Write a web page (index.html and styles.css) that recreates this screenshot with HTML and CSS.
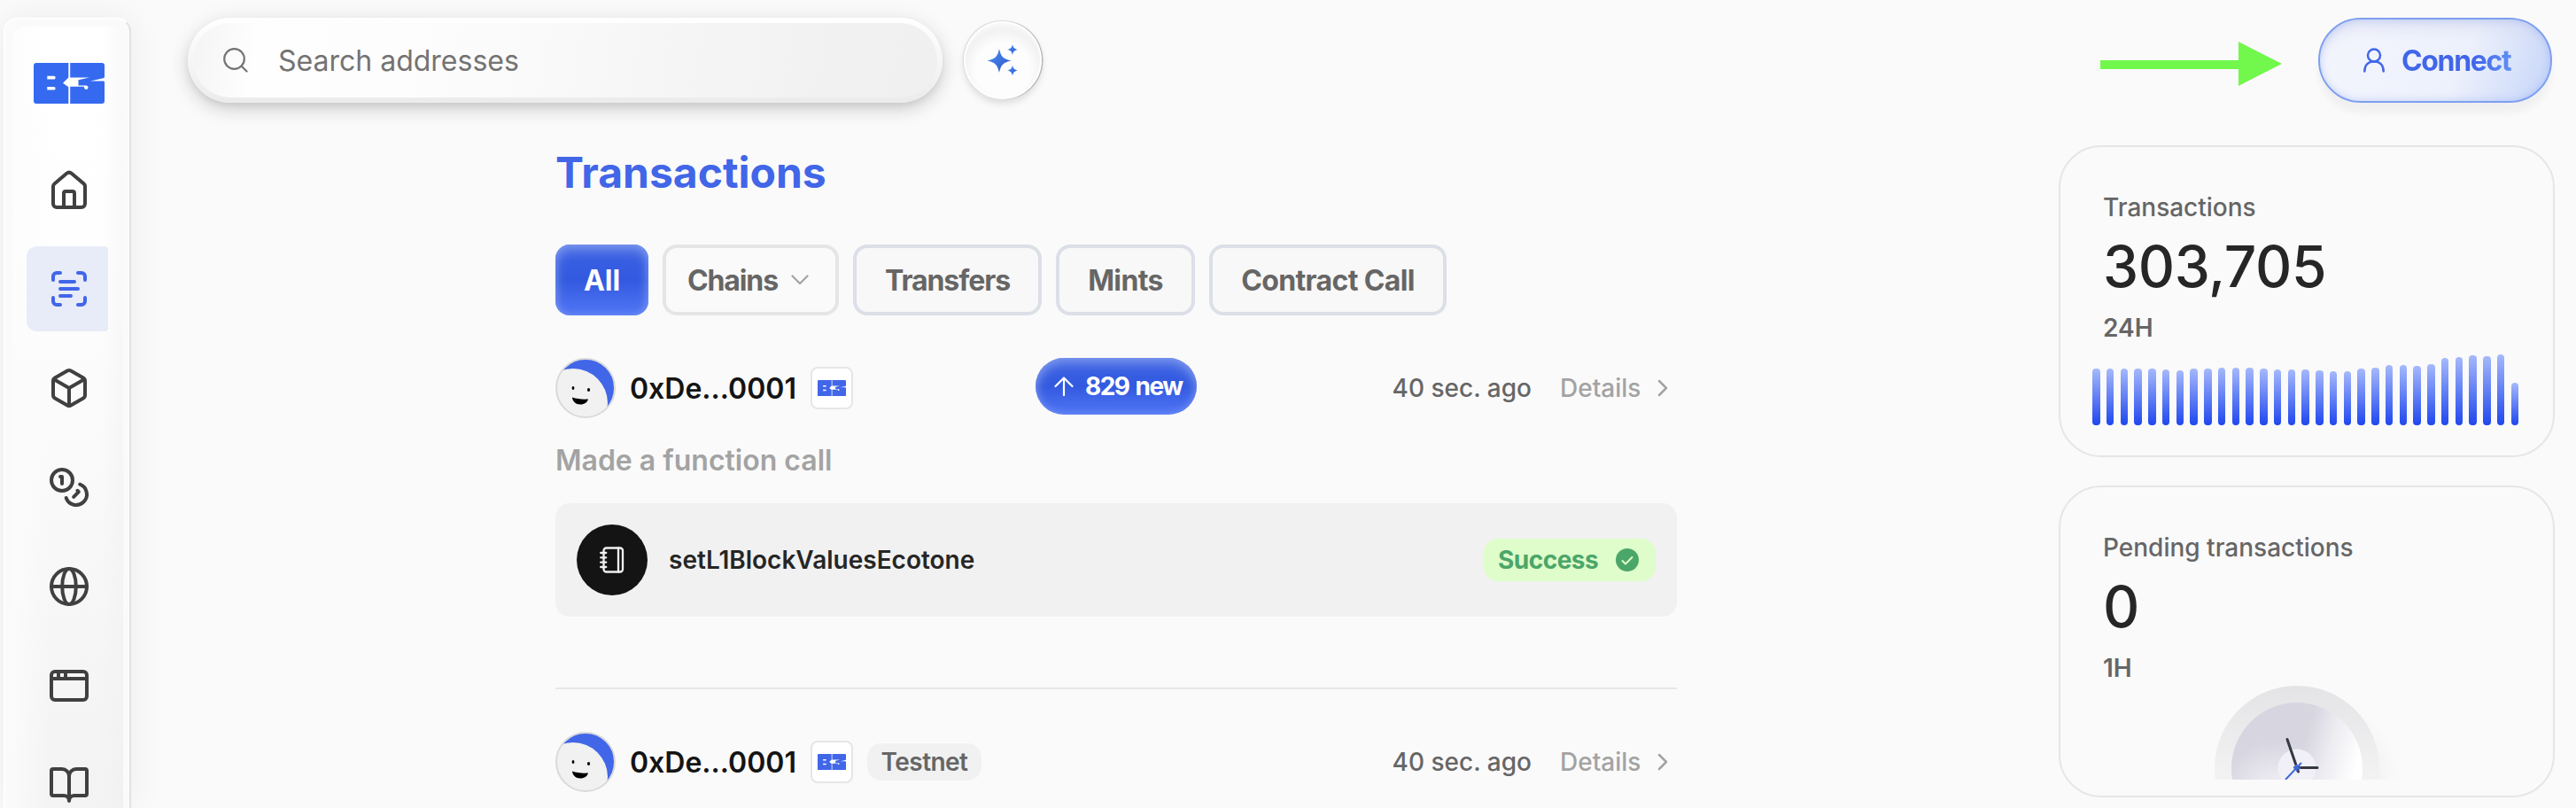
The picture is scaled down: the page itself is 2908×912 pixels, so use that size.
FILE: index.html
```
<!DOCTYPE html>
<html lang="en">
<head>
<meta charset="utf-8">
<title>Transactions</title>
<link rel="stylesheet" href="styles.css">
</head>
<body>
<svg class="defs" width="0" height="0" aria-hidden="true">
  <symbol id="b3" viewBox="0 0 80 46">
    <path fill="currentColor" d="M3 0h36.300v16.500L33 22.700l6.300 4.600V46H3a3 3 0 0 1-3-3V3a3 3 0 0 1 3-3zM15.300 14.700v3.800h7.500c2.400 0 2.400-3.800 0-3.800zM15.300 27v3.600h7.500c2.400 0 2.400-3.600 0-3.600z" fill-rule="evenodd"/>
    <path fill="currentColor" d="M41.200 0H77a3 3 0 0 1 3 3v12.500c0 1-.6 1.500-1.500 1.700L64 20.500h14.500c1 0 1.500.5 1.500 1.500V43a3 3 0 0 1-3 3H41.200V26.800h15.600c0 4 4.700 4 4.700 1 0-2-1.500-2.300-3-2.300h-8v-6.300L63 16.400H41.200z"/>
  </symbol>
  <symbol id="chev" viewBox="0 0 12 20"><path d="M2 2l8 8-8 8" fill="none" stroke="currentColor" stroke-width="2.500" stroke-linecap="round" stroke-linejoin="round"/></symbol>
  <symbol id="face" viewBox="0 0 68 68">
    <clipPath id="fc"><circle cx="34" cy="34" r="33"/></clipPath>
    <circle cx="34" cy="34" r="33" fill="#4166e8"/>
    <circle cx="20" cy="51" r="39" fill="#f1f1f1" clip-path="url(#fc)"/>
    <circle cx="34" cy="34" r="33" fill="none" stroke="#dadada" stroke-width="2"/>
    <ellipse cx="20" cy="34" rx="1.400" ry="2"/><ellipse cx="37.500" cy="36" rx="1.600" ry="2"/>
    <path d="M19 44.500c5 1.800 12 2.500 18 2-1 3.500-4 6-9 6s-8.600-3.500-9-8z"/>
  </symbol>
</svg>
<div class="app">
  <nav class="sidebar">
    <div class="panel">
      <svg class="logo"><use href="#b3"/></svg>
      <a class="nav"><svg viewBox="0 0 24 24"><path d="M3 10.200a2 2 0 0 1 .7-1.500l6.900-5.800a2.200 2.200 0 0 1 2.800 0l6.900 5.800a2 2 0 0 1 .7 1.500V20a2 2 0 0 1-2 2H5a2 2 0 0 1-2-2z"/><path d="M9 22v-8a1 1 0 0 1 1-1h4a1 1 0 0 1 1 1v8"/></svg></a>
      <a class="nav active"><svg viewBox="0 0 24 24"><path d="M3 7V5a2 2 0 0 1 2-2h2M17 3h2a2 2 0 0 1 2 2v2M21 17v2a2 2 0 0 1-2 2h-2M7 21H5a2 2 0 0 1-2-2v-2M7 8h8M7 12h10M7 16h6"/></svg></a>
      <a class="nav"><svg viewBox="0 0 24 24"><path d="M21 8a2 2 0 0 0-1-1.730l-7-4a2 2 0 0 0-2 0l-7 4A2 2 0 0 0 3 8v8a2 2 0 0 0 1 1.730l7 4a2 2 0 0 0 2 0l7-4A2 2 0 0 0 21 16zM3.300 7l8.700 5 8.700-5M12 22V12"/></svg></a>
      <a class="nav"><svg viewBox="0 0 24 24"><circle cx="8" cy="8" r="6"/><path d="M18.090 10.370A6 6 0 1 1 10.340 18M7 6h1v4M16.710 13.880l.7.710-2.820 2.820"/></svg></a>
      <a class="nav"><svg viewBox="0 0 24 24"><circle cx="12" cy="12" r="10"/><ellipse cx="12" cy="12" rx="3.900" ry="10"/><path d="M2 12h20"/></svg></a>
      <a class="nav"><svg viewBox="0 0 24 24"><rect x="2" y="4" width="20" height="16" rx="2"/><path d="M2 8h20M6 4v4M10 4v4"/></svg></a>
      <a class="nav last"><svg viewBox="0 0 24 24"><path d="M12 7v14M3 18a1 1 0 0 1-1-1V4a1 1 0 0 1 1-1h5a4 4 0 0 1 4 4 4 4 0 0 1 4-4h5a1 1 0 0 1 1 1v13a1 1 0 0 1-1 1h-6a3 3 0 0 0-3 3 3 3 0 0 0-3-3z"/></svg></a>
    </div>
  </nav>
  <div class="page">
    <header class="top">
      <div class="search">
        <svg viewBox="0 0 28 28"><circle cx="12.500" cy="12.500" r="11.300"/><path d="M20.500 20.500l6 6"/></svg>
        <span>Search addresses</span>
      </div>
      <button class="spark" aria-label="Assistant">
        <svg viewBox="0 0 36 36"><defs><linearGradient id="sg" x1="0" y1="0" x2="1" y2="1"><stop stop-color="#4c90f5"/><stop offset="1" stop-color="#2d55c8"/></linearGradient></defs>
        <g fill="url(#sg)"><path d="M14 5c2 9 4.500 11.500 13.500 13.500C18.500 20.500 16 23 14 32c-2-9-4.500-11.500-13.500-13.500C9.500 16.500 12 14 14 5z"/><path d="M29 0c.8 4 2.200 5.300 6 6-3.800.8-5.200 2-6 6-.8-4-2.200-5.200-6-6 3.800-.7 5.200-2 6-6z"/><path d="M29 23.500c.8 4 2.200 5.300 6 6-3.800.8-5.200 2-6 6-.8-4-2.200-5.200-6-6 3.800-.7 5.200-2 6-6z"/></g></svg>
      </button>
      <svg class="arrow" viewBox="0 0 205 50"><path d="M0 21h156V0l49 25-49 25V31H0z" fill="#72f74c"/></svg>
      <button class="connect">
        <svg viewBox="0 0 24 28"><circle cx="12" cy="8.500" r="7"/><path d="M1.300 26.500C1.300 19.500 5.500 15.500 12 15.500s10.700 4 10.700 11"/></svg>
        <span>Connect</span>
      </button>
    </header>
    <div class="content">
      <main class="feed">
        <h1>Transactions</h1>
        <div class="chips">
          <button class="chip all">All</button>
          <button class="chip chains"><span>Chains</span><svg viewBox="0 0 20 12"><path d="M1.500 1.500L10 10l8.500-8.500"/></svg></button>
          <button class="chip w1">Transfers</button>
          <button class="chip w2">Mints</button>
          <button class="chip w3">Contract Call</button>
        </div>
        <article class="tx">
          <div class="row">
            <svg class="face"><use href="#face"/></svg>
            <span class="addr">0xDe...0001</span>
            <span class="net"><svg><use href="#b3"/></svg></span>
            <span class="time">40 sec. ago</span>
            <a class="details">Details<svg><use href="#chev"/></svg></a>
          </div>
          <p class="kind">Made a function call</p>
          <div class="call">
            <span class="disc"><svg viewBox="0 0 28 30"><rect x="4.500" y="1.500" width="21.500" height="27" rx="3"/><path d="M21 1.500v27M1.200 7h6M1.200 12.300h6M1.200 17.700h6M1.200 23h6"/></svg></span>
            <span class="fn">setL1BlockValuesEcotone</span>
            <span class="ok">Success<svg viewBox="0 0 26 26"><circle cx="13" cy="13" r="13" fill="#4ba669"/><path d="M7.500 14l3.500 3.500 7.500-7.500" fill="none" stroke="#dffdca" stroke-width="2" stroke-linecap="round" stroke-linejoin="round"/></svg></span>
          </div>
        </article>
        <article class="tx">
          <div class="row">
            <svg class="face"><use href="#face"/></svg>
            <span class="addr">0xDe...0001</span>
            <span class="net"><svg><use href="#b3"/></svg></span>
            <span class="tag">Testnet</span>
            <span class="time">40 sec. ago</span>
            <a class="details">Details<svg><use href="#chev"/></svg></a>
          </div>
        </article>
        <button class="fresh"><svg viewBox="0 0 22 22"><path d="M11 21V1.500M1.500 11L11 1.500l9.500 9.500"/></svg><span>829 new</span></button>
      </main>
      <aside class="stats">
        <section class="card">
          <h2>Transactions</h2>
          <div class="num">303,705</div>
          <div class="span">24H</div>
          <div class="bars">
            <i style="height:64px"></i><i style="height:63.700px"></i><i style="height:64.300px"></i><i style="height:64px"></i><i style="height:64px"></i><i style="height:63.300px"></i><i style="height:62.300px"></i><i style="height:64px"></i><i style="height:64px"></i><i style="height:65.300px"></i><i style="height:64.700px"></i><i style="height:64.700px"></i><i style="height:64px"></i><i style="height:63.300px"></i><i style="height:63.300px"></i><i style="height:62.700px"></i><i style="height:62px"></i><i style="height:61px"></i><i style="height:61px"></i><i style="height:64.300px"></i><i style="height:65px"></i><i style="height:68.300px"></i><i style="height:68px"></i><i style="height:67.300px"></i><i style="height:69px"></i><i style="height:76px"></i><i style="height:76.700px"></i><i style="height:79.300px"></i><i style="height:77.700px"></i><i style="height:80.300px"></i><i style="height:48px"></i>
          </div>
        </section>
        <section class="card">
          <h2>Pending transactions</h2>
          <div class="num">0</div>
          <div class="span">1H</div>
          <svg class="clock" viewBox="0 0 260 106">
            <defs>
              <linearGradient id="rim" x1="0" y1="0" x2="0" y2="1"><stop stop-color="#e4e4e6"/><stop offset=".55" stop-color="#f2f2f3"/></linearGradient>
              <linearGradient id="dial" x1=".2" y1=".3" x2=".95" y2=".5"><stop offset=".45" stop-color="#d7d5e0"/><stop offset=".7" stop-color="#ececf1"/><stop offset="1" stop-color="#fff"/></linearGradient>
              <radialGradient id="low" gradientUnits="userSpaceOnUse" cx="104" cy="124" r="62"><stop offset=".1" stop-color="#f4f4f8" stop-opacity=".9"/><stop offset="1" stop-color="#f4f4f8" stop-opacity="0"/></radialGradient>
              <filter id="soft" x="-50%" y="-50%" width="200%" height="200%"><feGaussianBlur stdDeviation="11"/></filter>
            </defs>
            <circle cx="149" cy="106" r="80" fill="#ececee" opacity=".6" filter="url(#soft)"/>
            <circle cx="129" cy="93" r="93" fill="url(#rim)"/>
            <circle cx="129" cy="93" r="74" fill="url(#dial)"/>
            <circle cx="129" cy="93" r="74" fill="url(#low)"/>
            <circle cx="129" cy="93" r="21.500" fill="#f1f0f6"/>
            <path d="M130.500 97L118 60.500M127 92.500h25" stroke="#343840" stroke-width="3" stroke-linecap="round"/>
            <path d="M134 87l-18 19M125 92l8 1.500M128 89l1 8" stroke="#4169dc" stroke-width="2"/>
          </svg>
        </section>
      </aside>
    </div>
  </div>
</div>
</body>
</html>
```
FILE: styles.css
```
* { box-sizing: border-box; }
body { margin: 0; width: 2908px; height: 912px; overflow: hidden; background: #fafafa; font-family: Inter, "Liberation Sans", sans-serif; color: #666; }
button { font: inherit; color: inherit; border: 0; padding: 0; margin: 0; }
h1, h2, p { margin: 0; }
.defs { position: absolute; }
.app { display: flex; height: 912px; overflow: hidden; }

.sidebar { flex: none; width: 144px; height: 892px; margin: 20px 0 0 4px; padding: 8px 8px 0; border: 2px solid #fff; border-right-color: #e2e2e2; border-bottom: 0; border-radius: 16px 16px 0 0; background: #fafafa; box-shadow: 0 0 40px rgba(0,0,0,.06); }
.panel { display: flex; flex-direction: column; align-items: center; height: 882px; padding: 41px 1px 0 0; border-radius: 12px 12px 0 0; background: linear-gradient(90deg, rgba(252,252,252,.8), rgba(250,250,250,0) 35%, rgba(240,240,240,0) 80%, rgba(236,236,236,.3)), linear-gradient(#fff, #fefefe 30%, #f8f8f8 65%, #f3f3f3); margin-right: -1px; }
.logo { width: 80px; height: 46px; margin: 0 0 48px 4px; color: #356af0; flex: none; }
.nav { display: flex; align-items: center; justify-content: center; flex: none; width: 92px; height: 96px; margin-bottom: 16px; }
.logo + .nav { margin-top: 1px; }
.nav.active { border-radius: 12px 4px 4px 12px; background: #e8ebf8; color: #4166e8; }
.nav.last { height: 72px; margin-bottom: 0; align-items: flex-end; }
.nav svg { width: 48px; height: 48px; margin-left: 4px; fill: none; stroke: #404040; stroke-width: 2; stroke-linecap: round; stroke-linejoin: round; }
.nav.active svg { stroke: #4166e8; }

.page { flex: 1; }
.top { display: flex; align-items: center; height: 116px; padding: 20px 27px 0 64px; }
.search { display: flex; align-items: center; gap: 34px; width: 852px; height: 96px; padding-left: 34px; border: 6px solid transparent; border-radius: 48px; background: linear-gradient(100deg, #f4f4f4, #fefefe 9%, #fdfdfd 30%, #f1f1f1 85%, #f0f0f0) padding-box, linear-gradient(#fff, #f6f6f6 50%, #ebebeb) border-box; box-shadow: 0 8px 20px rgba(0,0,0,.15), 0 4px 6px rgba(0,0,0,.06), 0 0 30px rgba(0,0,0,.04); font-size: 32px; color: #737373; }
.search svg { width: 28px; height: 28px; fill: none; stroke: #737373; stroke-width: 2.200; stroke-linecap: round; }
.spark { display: flex; align-items: center; justify-content: center; width: 88px; height: 88px; margin-left: 24px; border: 2px solid #fff; border-radius: 50%; background: radial-gradient(circle at 50% 62%, #fdfdfd 45%, #f2f2f2 66%, #fafafa 80%); box-shadow: 0 5px 8px rgba(0,0,0,.12), 1.500px 0 1px rgba(0,0,0,.26), -1px -1px 1px rgba(0,0,0,.1); }
.spark svg { width: 36px; height: 36px; }
.arrow { width: 205px; height: 50px; margin: 8px 41px 0 auto; }
.connect { display: flex; align-items: center; gap: 19px; width: 264px; height: 96px; padding-left: 49px; border: 2px solid #7f9ff0; border-radius: 48px; background: linear-gradient(115deg, #f3f5fd 10%, #edf1fc 60%, #cddaf9 92%); box-shadow: 0 11px 8px rgba(0,0,0,.045), inset 0 0 8px rgba(130,165,245,.45), inset 0 22px 16px -12px rgba(205,212,235,.5); color: #4166e8; font-size: 32px; font-weight: 700; }
.connect svg { width: 24px; height: 28px; fill: none; stroke: #4166e8; stroke-width: 2.500; stroke-linecap: round; }
.connect span { background: linear-gradient(90deg, #4166e8 65%, #6190f3); -webkit-background-clip: text; background-clip: text; color: transparent; letter-spacing: -.042em; padding-right: 2px; }

.content { display: flex; align-items: flex-start; padding: 48px 24px 0 479px; }
.feed { position: relative; width: 1266px; }
h1 { font-size: 48px; line-height: 62px; font-weight: 700; color: #4166e8; }
.chips { display: flex; gap: 16px; margin: 50px 0 48px; }
.chip { width: 213px; height: 80px; border: 4px solid #dcdfe7; border-radius: 16px; background: #f8f8f8; font-size: 32px; font-weight: 700; letter-spacing: -.02em; color: #666; }
.all { width: 105px; border: 0; color: #fff; letter-spacing: 0; }
.all, .fresh { background: linear-gradient(#3c62e4, #3259df 50%, #5277f6); box-shadow: inset 0 6px 14px rgba(160,180,240,.6), inset 0 0 8px rgba(120,150,245,.5); }
.chains { display: flex; align-items: center; width: 199px; padding-left: 24px; gap: 15px; border-color: #e5e5e5; background: #fafafa; letter-spacing: -.035em; }
.chains svg { width: 20px; height: 12px; fill: none; stroke: #a3a3a3; stroke-width: 2.200; stroke-linecap: round; stroke-linejoin: round; }
.w1 { letter-spacing: -.033em; }
.w2 { width: 157px; }
.w3 { width: 268px; }

.tx + .tx { border-top: 2px solid #e6e6e6; margin-top: 80px; padding-top: 48px; }
.row { display: flex; align-items: center; height: 68px; }
.face { width: 68px; height: 68px; flex: none; }
.addr { flex: none; width: 203px; margin-right: 17px; padding-left: 16px; font-size: 32px; font-weight: 600; color: #141414; white-space: nowrap; }
.net { display: flex; align-items: center; justify-content: center; width: 48px; height: 48px; border: 2px solid #e6e6e6; border-radius: 8px; background: #fff; color: #4166e8; }
.net svg { width: 32px; height: 18.400px; }
.tag { margin-left: 16px; width: 129px; height: 42px; border-radius: 16px; background: #f1f1f1; font-size: 28px; line-height: 42px; font-weight: 600; text-align: center; letter-spacing: -.02em; }
.time { margin-left: auto; font-size: 28px; font-weight: 500; }
.details { display: flex; align-items: center; width: 132px; margin-left: 32px; justify-content: space-between; padding-right: 10px; font-size: 28px; font-weight: 500; color: #a3a3a3; }
.details svg { width: 12px; height: 20px; }
.kind { margin: 28px 0; font-size: 32px; line-height: 40px; font-weight: 600; color: #a3a3a3; }
.call { display: flex; align-items: center; height: 128px; padding: 0 24px; border-radius: 16px; background: #f1f1f1; }
.disc { display: flex; align-items: center; justify-content: center; width: 80px; height: 80px; border-radius: 50%; background: #141414; }
.disc svg { width: 28px; height: 30px; fill: none; stroke: #f1f1f1; stroke-width: 2.300; stroke-linecap: round; }
.fn { margin-left: 24px; font-size: 28px; font-weight: 600; color: #262626; }
.ok { display: flex; align-items: center; justify-content: space-between; width: 194px; height: 48px; margin-left: auto; padding: 0 19px 0 16px; border-radius: 16px; background: #dffdca; color: #4ba669; font-size: 28px; font-weight: 700; letter-spacing: -.018em; }
.ok svg { width: 26px; height: 26px; }
.fresh { position: absolute; left: 542px; top: 240px; display: flex; align-items: center; gap: 13px; width: 182px; height: 64px; padding-left: 21px; border-radius: 32px; color: #fff; font-size: 28px; font-weight: 700; letter-spacing: -.055em; word-spacing: 2px; white-space: nowrap; }
.fresh svg { width: 22px; height: 22px; fill: none; stroke: #fff; stroke-width: 2.200; stroke-linecap: round; stroke-linejoin: round; }

.stats { display: flex; flex-direction: column; gap: 32px; width: 560px; margin-left: auto; }
.card { height: 352px; padding: 48px 38px 0 36px; border: 2px solid #e6e6e6; border-radius: 48px; }
.card h2, .span { padding-left: 12px; font-size: 28px; line-height: 40px; font-weight: 500; color: #666; }
.num { margin: 15px 0 17px; padding-left: 12px; font-size: 64px; line-height: 64px; font-weight: 550; letter-spacing: -.006em; color: #262626; }
.card .span { font-weight: 600; }
.bars { display: flex; align-items: flex-end; justify-content: space-between; width: 481px; height: 90px; }
.bars i { width: 8.500px; border-radius: 4px; background: linear-gradient(#a6b9fb, #1f47ee); }
.clock { display: block; width: 260px; height: 106px; margin: 0 0 0 101.500px; }
```
